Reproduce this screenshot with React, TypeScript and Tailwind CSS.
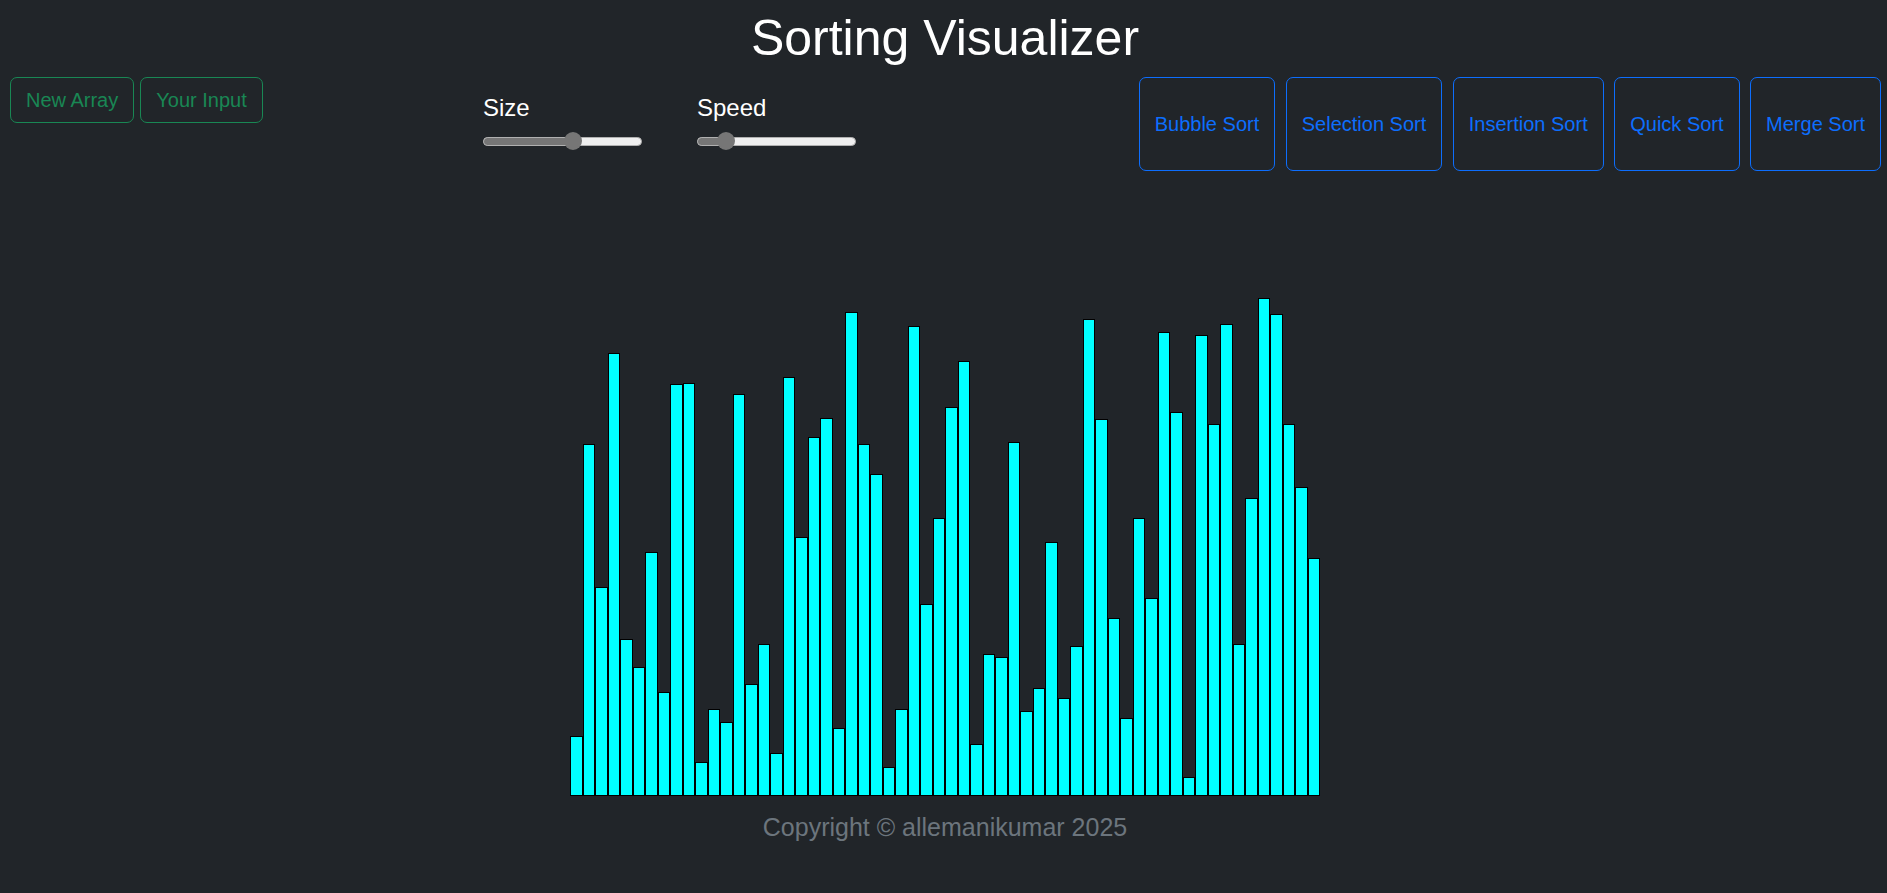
import React from "react";

const heights = [
  60, 352, 209, 443, 157, 129, 244, 104, 412, 413, 34, 87, 74, 402, 112, 152,
  43, 419, 259, 359, 378, 68, 484, 352, 322, 29, 87, 470, 192, 278, 389, 435,
  52, 142, 139, 354, 85, 108, 254, 98, 150, 477, 377, 178, 78, 278, 198, 464,
  384, 19, 461, 372, 472, 152, 298, 498, 482, 372, 309, 238,
];

const sorts = ["Bubble Sort", "Selection Sort", "Insertion Sort", "Quick Sort", "Merge Sort"];

function Slider({ label, thumb }: { label: string; thumb: number }) {
  return (
    <div className="flex flex-col">
      <span className="text-[24px] leading-[36px] text-white">{label}</span>
      <div className="relative mt-[5px] flex h-[20px] w-[159px] items-center">
        <div className="flex h-[9px] w-full overflow-hidden rounded-full border border-[#b0b0b0] bg-[#efefef]">
          <div className="h-full bg-[#767676]" style={{ width: thumb + 9 }} />
        </div>
        {/* thumb */}
        <div
          className="absolute top-[1px] h-[18px] w-[18px] rounded-full bg-[#767676]"
          style={{ left: thumb }}
        />
      </div>
    </div>
  );
}

export default function App() {
  return (
    <div className="min-h-[893px] bg-[#212529] font-['Liberation_Sans',Arial,sans-serif]">
      {/* Title */}
      <h1 className="pt-[8px] pl-[3px] text-center text-[50px] leading-[60px] font-normal text-white">
        Sorting Visualizer
      </h1>

      {/* Controls */}
      <div className="mt-[9px] flex items-start">
        <div className="flex w-[482px] gap-[6px] pl-[10px]">
          <button className="rounded-[7px] border border-[#198754] px-[15px] py-[7px] text-[20px] leading-[30px] text-[#198754]">
            New Array
          </button>
          <button className="rounded-[7px] border border-[#198754] px-[15px] py-[7px] text-[20px] leading-[30px] text-[#198754]">
            Your Input
          </button>
        </div>

        <div className="mt-[13px] flex flex-1 gap-[55px] pl-[1px]">
          <Slider label="Size" thumb={81} />
          <Slider label="Speed" thumb={20} />
        </div>

        <div className="flex gap-[10.5px] pr-[6px]">
          {sorts.map((s) => (
            <button
              key={s}
              className="h-[94px] rounded-[7px] border border-[#0d6efd] px-[15px] text-[20px] leading-[30px] text-[#0d6efd]"
            >
              {s}
            </button>
          ))}
        </div>
      </div>

      {/* Bars */}
      <div className="flex h-[625px] items-end justify-center pl-[3px]">
        {heights.map((h, i) => (
          <div
            key={i}
            className="w-[12.5px] border border-black bg-[#00ffff]"
            style={{ height: h }}
          />
        ))}
      </div>

      <p className="mt-[13px] pl-[3px] text-center text-[25px] leading-[37.5px] text-[#6c757d]">
        Copyright © allemanikumar 2025
      </p>
    </div>
  );
}
